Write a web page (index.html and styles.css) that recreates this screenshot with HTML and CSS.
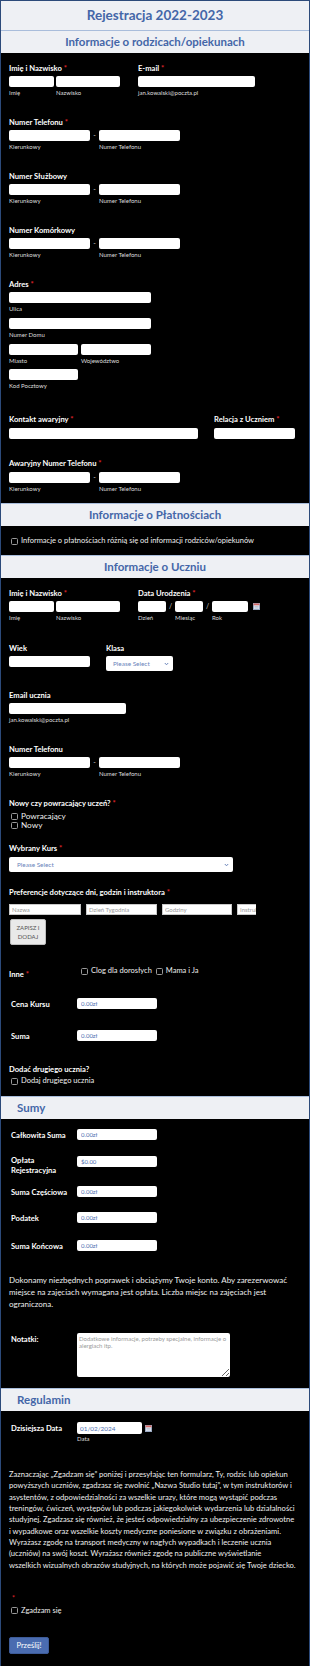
FILE: index.html
```html
<!DOCTYPE html>
<html lang="pl">
<head>
    <meta charset="UTF-8">
    <meta name="viewport" content="width=device-width, initial-scale=1.0">
    <title>Rejestracja 2022-2023</title>
    <link rel="stylesheet" href="styles.css">
</head>
<body>
<div class="form">
    <div class="title">Rejestracja 2022-2023</div>
    <div class="head head-first">Informacje o rodzicach/opiekunach</div>

    <div class="section sec-parents">
        <div class="row">
            <div class="col w129">
                <div class="label">Imię i Nazwisko <span class="req">*</span></div>
                <div class="inputs mt3">
                    <div class="part"><input class="inp w45"><div class="sub">Imię</div></div>
                    <div class="part"><input class="inp w64"><div class="sub">Nazwisko</div></div>
                </div>
            </div>
            <div class="col">
                <div class="label">E-mail <span class="req">*</span></div>
                <input class="inp w117 mt3">
                <div class="sub">jan.kowalski@poczta.pl</div>
            </div>
        </div>

        <div class="field">
            <div class="label">Numer Telefonu <span class="req">*</span></div>
            <div class="inputs mt3">
                <div class="part"><input class="inp w81"><div class="sub">Kierunkowy</div></div>
                <span class="dash">-</span>
                <div class="part"><input class="inp w81"><div class="sub">Numer Telefonu</div></div>
            </div>
        </div>

        <div class="field">
            <div class="label">Numer Służbowy</div>
            <div class="inputs mt3">
                <div class="part"><input class="inp w81"><div class="sub">Kierunkowy</div></div>
                <span class="dash">-</span>
                <div class="part"><input class="inp w81"><div class="sub">Numer Telefonu</div></div>
            </div>
        </div>

        <div class="field">
            <div class="label">Numer Komórkowy</div>
            <div class="inputs mt3">
                <div class="part"><input class="inp w81"><div class="sub">Kierunkowy</div></div>
                <span class="dash">-</span>
                <div class="part"><input class="inp w81"><div class="sub">Numer Telefonu</div></div>
            </div>
        </div>

        <div class="field">
            <div class="label">Adres <span class="req">*</span></div>
            <input class="inp w142 mt3">
            <div class="sub">Ulica</div>
            <input class="inp w142 mt5">
            <div class="sub">Numer Domu</div>
            <div class="inputs gap3 mt5">
                <div class="part"><input class="inp w69"><div class="sub">Miasto</div></div>
                <div class="part"><input class="inp w70"><div class="sub">Województwo</div></div>
            </div>
            <input class="inp w69 mt4">
            <div class="sub">Kod Pocztowy</div>
        </div>

        <div class="row mt24">
            <div class="col w205">
                <div class="label">Kontakt awaryjny <span class="req">*</span></div>
                <input class="inp w189 mt4">
            </div>
            <div class="col">
                <div class="label">Relacja z Uczniem <span class="req">*</span></div>
                <input class="inp w81 mt4">
            </div>
        </div>

        <div class="field mt19">
            <div class="label">Awaryjny Numer Telefonu <span class="req">*</span></div>
            <div class="inputs mt4">
                <div class="part"><input class="inp w81"><div class="sub">Kierunkowy</div></div>
                <span class="dash">-</span>
                <div class="part"><input class="inp w81"><div class="sub">Numer Telefonu</div></div>
            </div>
        </div>
    </div>

    <div class="head">Informacje o Płatnościach</div>
    <div class="section sec-pay">
        <label class="check"><input type="checkbox" class="cb">Informacje o płatnościach różnią się od informacji rodziców/opiekunów</label>
    </div>

    <div class="head">Informacje o Uczniu</div>
    <div class="section sec-student">
        <div class="row">
            <div class="col w129">
                <div class="label">Imię i Nazwisko <span class="req">*</span></div>
                <div class="inputs mt3">
                    <div class="part"><input class="inp w45"><div class="sub">Imię</div></div>
                    <div class="part"><input class="inp w64"><div class="sub">Nazwisko</div></div>
                </div>
            </div>
            <div class="col">
                <div class="label">Data Urodzenia <span class="req">*</span></div>
                <div class="inputs mt3">
                    <div class="part"><input class="inp w28"><div class="sub">Dzień</div></div>
                    <span class="dash">/</span>
                    <div class="part"><input class="inp w28"><div class="sub">Miesiąc</div></div>
                    <span class="dash">/</span>
                    <div class="part"><input class="inp w36"><div class="sub">Rok</div></div>
                    <svg class="cal" width="7" height="7" viewBox="0 0 7 7"><rect x="0.5" y="0.5" width="6" height="6" fill="#e3e8f0" stroke="#9aa9c2"/><rect x="0.5" y="0.5" width="6" height="1.8" fill="#d66a66"/><path d="M1.5 3.6h4M1.5 5h4" stroke="#9aa9c2" stroke-width="0.6"/></svg>
                </div>
            </div>
        </div>

        <div class="row mt21">
            <div class="col w97">
                <div class="label">Wiek</div>
                <input class="inp w81 mt3">
            </div>
            <div class="col">
                <div class="label">Klasa</div>
                <div class="select w67 mt3">Please Select
                    <svg width="5" height="4" viewBox="0 0 5 4"><path d="M0.8 1 L2.5 2.8 L4.2 1" stroke="#6c86bb" stroke-width="1" fill="none"/></svg>
                </div>
            </div>
        </div>

        <div class="field mt19">
            <div class="label">Email ucznia</div>
            <input class="inp w117 mt3">
            <div class="sub">jan.kowalski@poczta.pl</div>
        </div>

        <div class="field">
            <div class="label">Numer Telefonu</div>
            <div class="inputs mt3">
                <div class="part"><input class="inp w81"><div class="sub">Kierunkowy</div></div>
                <span class="dash">-</span>
                <div class="part"><input class="inp w81"><div class="sub">Numer Telefonu</div></div>
            </div>
        </div>

        <div class="field">
            <div class="label">Nowy czy powracający uczeń? <span class="req">*</span></div>
            <div class="checklist mt4">
                <label class="check big"><input type="checkbox" class="cb">Powracający</label>
                <label class="check big"><input type="checkbox" class="cb">Nowy</label>
            </div>
        </div>

        <div class="field mt13">
            <div class="label">Wybrany Kurs <span class="req">*</span></div>
            <div class="select w224 tall mt4">Please Select
                <svg width="5" height="4" viewBox="0 0 5 4"><path d="M0.8 1 L2.5 2.8 L4.2 1" stroke="#6c86bb" stroke-width="1" fill="none"/></svg>
            </div>
        </div>

        <div class="field mt15">
            <div class="label">Preferencje dotyczące dni, godzin i instruktora <span class="req">*</span></div>
            <div class="pref mt7">
                <input class="box-inp w72" placeholder="Nazwa">
                <input class="box-inp w71" placeholder="Dzień Tygodnia">
                <input class="box-inp w70" placeholder="Godziny">
                <input class="box-inp w70" placeholder="Instruktor">
            </div>
            <button class="add mt4">ZAPISZ I<br>DODAJ</button>
        </div>

        <div class="line mt21 top">
            <div class="side-label inne">Inne <span class="req">*</span></div>
            <label class="check"><input type="checkbox" class="cb">Clog dla dorosłych</label>
            <label class="check ml2"><input type="checkbox" class="cb">Mama i Ja</label>
        </div>

        <div class="line mt19">
            <div class="side-label">Cena Kursu</div>
            <input class="inp w80 val" value="0.00zł">
        </div>

        <div class="line mt21">
            <div class="side-label">Suma</div>
            <input class="inp w80 val" value="0.00zł">
        </div>

        <div class="field mt23">
            <div class="label">Dodać drugiego ucznia?</div>
            <label class="check mt2"><input type="checkbox" class="cb">Dodaj drugiego ucznia</label>
        </div>
    </div>

    <div class="head head-left">Sumy</div>
    <div class="section sec-sums">
        <div class="line">
            <div class="side-label">Całkowita Suma</div>
            <input class="inp w80 val" value="0.00zł">
        </div>
        <div class="line top mt16">
            <div class="side-label two">Opłata<br>Rejestracyjna</div>
            <input class="inp w80 val" value="$0.00">
        </div>
        <div class="line mt11">
            <div class="side-label">Suma Częściowa</div>
            <input class="inp w80 val" value="0.00zł">
        </div>
        <div class="line mt15">
            <div class="side-label">Podatek</div>
            <input class="inp w80 val" value="0.00zł">
        </div>
        <div class="line mt17">
            <div class="side-label">Suma Końcowa</div>
            <input class="inp w80 val" value="0.00zł">
        </div>

        <p class="note">Dokonamy niezbędnych poprawek i obciążymy Twoje konto. Aby zarezerwować miejsce na zajęciach wymagana jest opłata. Liczba miejsc na zajęciach jest ograniczona.</p>

        <div class="line top mt23">
            <div class="side-label pt1">Notatki:</div>
            <textarea class="notes" placeholder="Dodatkowe informacje, potrzeby specjalne, informacje o alergiach itp."></textarea>
        </div>
    </div>

    <div class="head head-left">Regulamin</div>
    <div class="section sec-terms">
        <div class="line">
            <div class="side-label">Dzisiejsza Data</div>
            <input class="inp w65 date val" value="01/02/2024">
            <svg class="cal" width="7" height="7" viewBox="0 0 7 7"><rect x="0.5" y="0.5" width="6" height="6" fill="#e3e8f0" stroke="#9aa9c2"/><rect x="0.5" y="0.5" width="6" height="1.8" fill="#d66a66"/><path d="M1.5 3.6h4M1.5 5h4" stroke="#9aa9c2" stroke-width="0.6"/></svg>
        </div>
        <div class="sub date-sub">Data</div>

        <p class="terms">Zaznaczając „Zgadzam się” poniżej i przesyłając ten formularz, Ty, rodzic lub opiekun powyższych uczniów, zgadzasz się zwolnić „Nazwa Studio tutaj”, w tym instruktorów i asystentów, z odpowiedzialności za wszelkie urazy, które mogą wystąpić podczas treningów, ćwiczeń, występów lub podczas jakiegokolwiek wydarzenia lub działalności studyjnej. Zgadzasz się również, że jesteś odpowiedzialny za ubezpieczenie zdrowotne<br>i wypadkowe oraz wszelkie koszty medyczne poniesione w związku z obrażeniami. Wyrażasz zgodę na transport medyczny w nagłych wypadkach i leczenie ucznia (uczniów) na swój koszt. Wyrażasz również zgodę na publiczne wyświetlanie<br>wszelkich wizualnych obrazów studyjnych, na których może pojawić się Twoje dziecko.</p>

        <div class="star"><span class="req">*</span></div>
        <label class="check mt3"><input type="checkbox" class="cb">Zgadzam się</label>

        <button class="submit">Prześlij!</button>
    </div>
</div>
</body>
</html>
```

FILE: styles.css
```css
* { box-sizing: border-box; }
body { margin: 0; background: #000; font-family: Lato, "Noto Sans", sans-serif; color: #fff; }
.form { width: 310px; min-height: 1666px; background: #000; border: 1px solid #2c4a7a; border-bottom: none; }

.title { height: 30px; line-height: 29px; background: #eef0f4; color: #4466a8; font-size: 13.5px; font-weight: 700; text-align: center; border-bottom: 1px solid #a9bddb; }
.head { height: 23px; line-height: 22px; background: #eef0f4; color: #4466a8; font-size: 11.5px; font-weight: 700; text-align: center; border-top: 1px solid #a9bddb; }
.head-first { height: 22px; line-height: 22px; border-top: none; }
.head-left { text-align: left; padding-left: 16px; }

.section { padding: 10px 8px; }
.sec-pay { padding: 10px 8px 9px; }
.sec-sums { padding: 10px 8px 11px; }
.sec-terms { padding: 11px 8px 12px; }

.row { display: flex; }
.col { display: flex; flex-direction: column; align-items: flex-start; }
.field { margin-top: 20px; display: flex; flex-direction: column; align-items: flex-start; }
.inputs { display: flex; gap: 2px; }
.gap3 { gap: 3px; }
.part { display: flex; flex-direction: column; }

.label { font-size: 7.6px; font-weight: 700; line-height: 10px; height: 10px; white-space: nowrap; }
.req { color: #e0262b; }
.sub { font-size: 6px; line-height: 8px; height: 8px; margin-top: 2px; color: #ddd; white-space: nowrap; }
.dash { width: 5px; font-size: 7px; line-height: 11px; height: 11px; text-align: center; color: #ccc; }

.inp { display: block; height: 11px; border: none; border-radius: 2px; background: #fff; padding: 0 3px; font-family: Lato, sans-serif; font-size: 6px; color: #4c6db0; outline: none; }
.val { padding-left: 4px; }
.date { height: 12px; font-size: 6.4px; padding-left: 3px; }

.select { height: 15px; border-radius: 2px; background: #fff; display: flex; align-items: center; justify-content: space-between; padding: 0 4px 0 7px; font-size: 6.4px; color: #6c86bb; }
.tall { height: 15px; padding-left: 8px; }

.cal { margin-left: 3px; margin-top: 2px; }
.line .cal { margin-top: 0; }

.check { display: flex; align-items: center; font-size: 7.5px; line-height: 10px; height: 10px; white-space: nowrap; color: #eee; }
.check.big { font-size: 8.2px; line-height: 9px; height: 9px; }
.cb { appearance: none; -webkit-appearance: none; flex: none; width: 7px; height: 7px; margin: 0 3px 0 2px; border: 1px solid #9a9a9a; border-radius: 1.5px; background: transparent; }
.ml2 { margin-left: 2px; }

.pref { display: flex; width: 247px; overflow: hidden; gap: 5px; }
.box-inp { flex: none; height: 11px; border: 1px solid #c9c9c9; background: #fff; padding: 0 2px; font-family: Lato, sans-serif; font-size: 6px; color: #888; border-radius: 0; }
.box-inp::placeholder { color: #9a9a9a; }
.add { width: 36px; height: 26px; margin-left: 1px; background: #e9e9e9; border: 1px solid #bdbdbd; border-radius: 2px; font-family: Lato, sans-serif; font-size: 6px; line-height: 9px; color: #555; padding: 0; }

.line { display: flex; align-items: center; }
.line.top { align-items: flex-start; }
.side-label { width: 68px; flex: none; padding-left: 2px; font-size: 7.6px; font-weight: 700; line-height: 10px; white-space: nowrap; }
.side-label.inne { width: 70px; margin-top: 3px; padding-left: 0; }
.side-label.two { line-height: 9.5px; }
.pt1 { padding-top: 1px; }

.note { margin: 23px 0 0; font-size: 8px; line-height: 12px; color: #eee; }
.notes { display: block; width: 153px; height: 44px; border: none; border-radius: 2px; padding: 2px 2px; font-family: Lato, sans-serif; font-size: 6px; line-height: 7px; color: #888; resize: vertical; }
.notes::placeholder { color: #9a9a9a; }

.date-sub { margin: 1px 0 0 68px; }
.terms { margin: 26px 0 0; font-size: 7.6px; line-height: 11.33px; color: #eee; }
.star { margin-top: 22px; height: 10px; line-height: 10px; font-size: 7px; padding-left: 3px; }

.submit { display: block; margin-top: 21px; width: 40px; height: 17px; padding: 0; background: #4a6cb0; color: #fff; border: 1px solid #3d5b98; border-radius: 2px; font-family: Lato, sans-serif; font-size: 7.5px; }

.w28 { width: 28px; } .w36 { width: 36px; } .w45 { width: 45px; } .w64 { width: 64px; }
.w65 { width: 65px; } .w67 { width: 67px; } .w69 { width: 69px; } .w70 { width: 70px; }
.w71 { width: 71px; } .w72 { width: 72px; } .w80 { width: 80px; } .w81 { width: 81px; }
.w97 { width: 97px; } .w117 { width: 117px; } .w129 { width: 129px; } .w142 { width: 142px; }
.w189 { width: 189px; } .w205 { width: 205px; } .w224 { width: 224px; }

.mt2 { margin-top: 2px; } .mt3 { margin-top: 3px; } .mt4 { margin-top: 4px; } .mt5 { margin-top: 5px; }
.mt7 { margin-top: 7px; } .mt11 { margin-top: 11px; } .mt13 { margin-top: 13px; } .mt15 { margin-top: 15px; }
.mt16 { margin-top: 16px; } .mt17 { margin-top: 17px; } .mt19 { margin-top: 19px; } .mt21 { margin-top: 21px; }
.mt23 { margin-top: 23px; } .mt24 { margin-top: 24px; }
```
